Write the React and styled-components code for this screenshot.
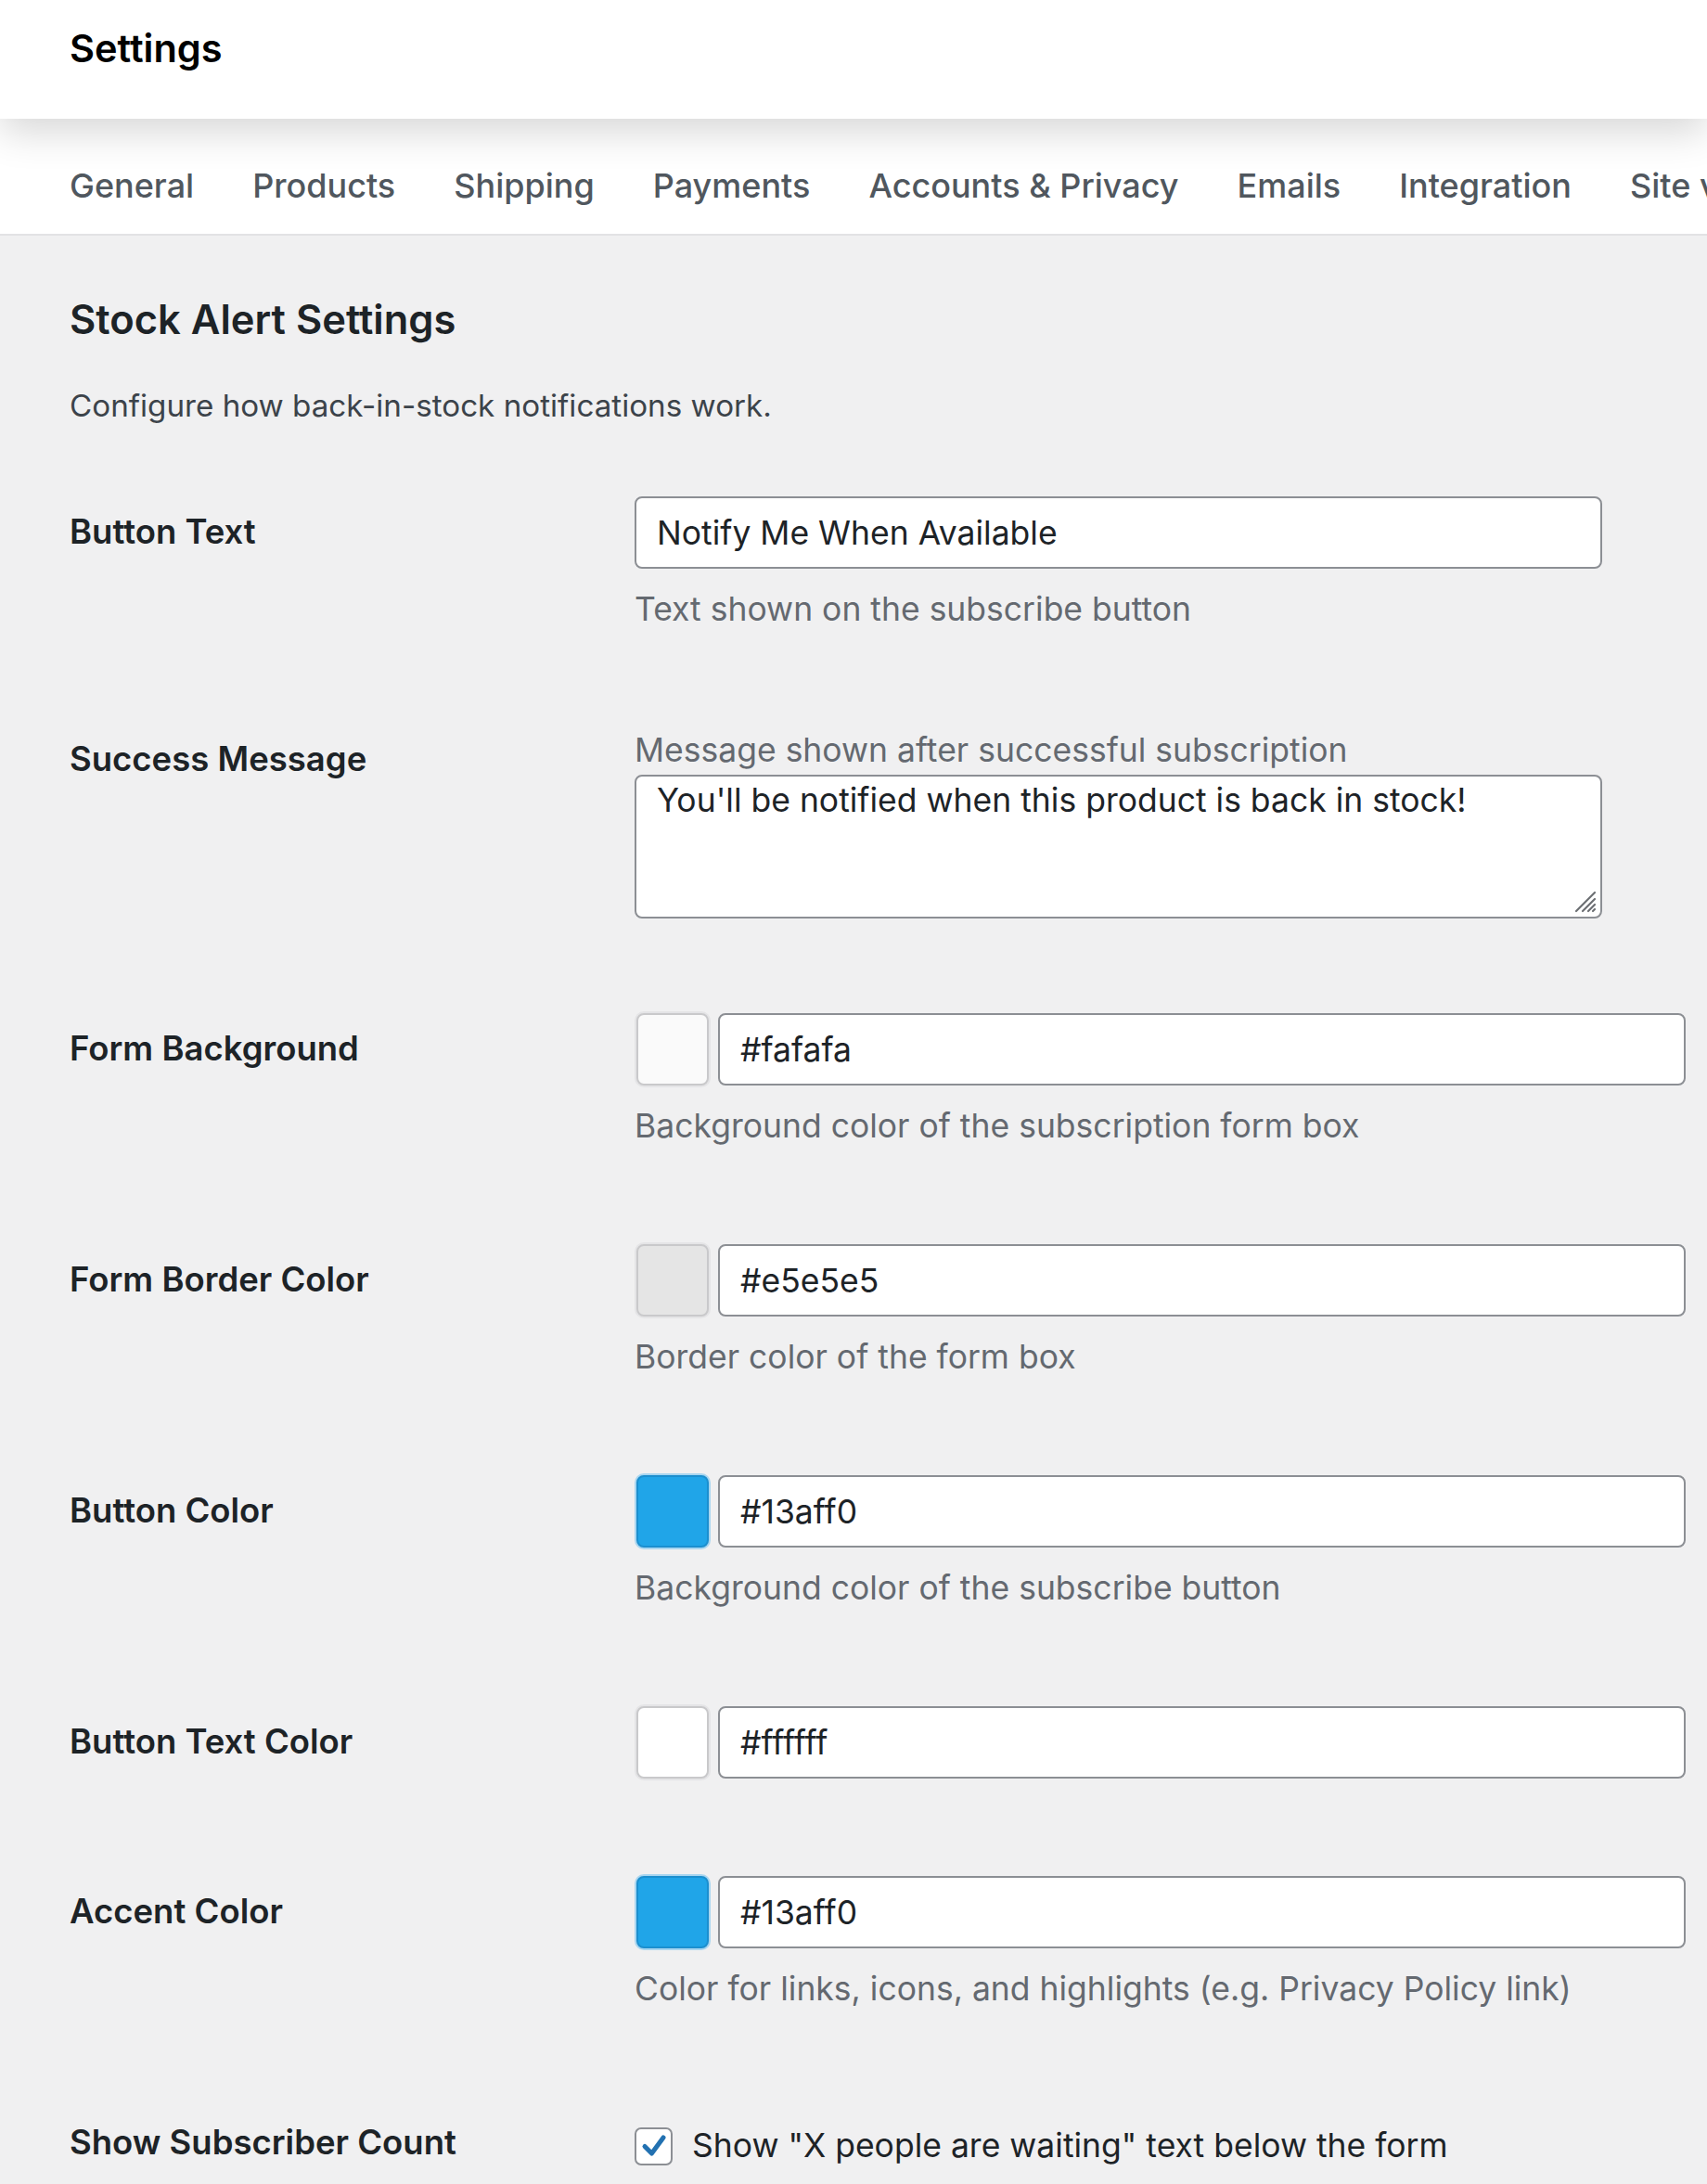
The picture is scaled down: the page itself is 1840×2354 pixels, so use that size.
import React from "react";
import styled, { createGlobalStyle } from "styled-components";

const GlobalStyle = createGlobalStyle`
  html, body {
    margin: 0;
    padding: 0;
    background: #f0f0f1;
  }
  body {
    font-family: Inter, "Noto Sans", "Liberation Sans", sans-serif;
    color: #1d2327;
    overflow: hidden;
  }
  * { box-sizing: border-box; }
`;

const Page = styled.div`
  width: 1840px;
  min-height: 2354px;
  background: #f0f0f1;
`;

const Header = styled.header`
  position: relative;
  z-index: 1;
  background: #fff;
  height: 128px;
  padding: 28px 75px 0;
  box-shadow: 0 14px 40px rgba(0, 0, 0, 0.16);
`;

const Title = styled.h1`
  margin: 0;
  font-size: 41.5px;
  line-height: 48px;
  font-weight: 600;
  color: #000;
`;

const Tabs = styled.nav`
  display: flex;
  gap: 63px;
  background: #fff;
  padding: 50px 0 30px 75px;
  border-bottom: 2px solid #e2e2e4;
  white-space: nowrap;
  overflow: hidden;
`;

const Tab = styled.a`
  font-size: 36px;
  line-height: 44px;
  font-weight: 500;
  color: #50575e;
  text-decoration: none;
  flex-shrink: 0;
`;

const Content = styled.main`
  padding: 62px 75px 0;
`;

const SectionTitle = styled.h2`
  margin: 0;
  font-size: 43.5px;
  line-height: 56px;
  font-weight: 600;
  color: #1d2327;
`;

const Intro = styled.p`
  margin: 43px 0 22px;
  font-size: 33.2px;
  line-height: 44px;
  color: #3c434a;
`;

const Row = styled.div`
  display: grid;
  grid-template-columns: 609px 1fr;
  padding: 54px 0 ${(p) => (p.tight ? "48px" : "51px")};
`;

const Label = styled.div`
  padding-top: ${(p) => (p.high ? "12px" : "16px")};
  font-size: 36.5px;
  line-height: 44px;
  font-weight: 600;
  color: #1d2327;
`;

const Field = styled.div`
  display: flex;
  flex-direction: column;
  align-items: flex-start;
`;

const TextInput = styled.input`
  width: 1043px;
  height: 78px;
  padding: 0 22px;
  border: 2px solid #8c8f94;
  border-radius: 8px;
  background: #fff;
  font-family: inherit;
  font-size: 35.5px;
  color: #1d2327;
  outline: none;
`;

const Help = styled.p`
  margin: ${(p) => (p.above ? "3px 0 4px" : "22px 0 0")};
  font-size: 35.5px;
  line-height: 44px;
  color: #646970;
`;

const AreaWrap = styled.div`
  position: relative;
  width: 1043px;
`;

const TextArea = styled.textarea`
  display: block;
  width: 1043px;
  height: 155px;
  padding: 4px 22px;
  border: 2px solid #8c8f94;
  border-radius: 8px;
  background: #fff;
  font-family: inherit;
  font-size: 35.5px;
  line-height: 44px;
  color: #1d2327;
  resize: none;
  outline: none;
`;

const Grip = styled.svg`
  position: absolute;
  right: 4px;
  bottom: 4px;
  width: 28px;
  height: 28px;
`;

const ColorLine = styled.div`
  display: flex;
  align-items: center;
  gap: 10px;
  padding-left: 2px;
`;

const Swatch = styled.span`
  display: block;
  width: 78px;
  height: 78px;
  border-radius: 8px;
  background: ${(p) => p.color};
  border: 2px solid ${(p) => (p.dark ? "#1b8fcf" : "#c9c9cb")};
  box-shadow: 0 0 0 2px ${(p) => (p.dark ? "#a9d6f0" : "#e4e4e6")};
`;

const CheckLine = styled.label`
  display: flex;
  align-items: center;
  gap: 21px;
  margin-top: 20px;
  font-size: 35.5px;
  line-height: 44px;
  color: #1d2327;
`;

const CheckBox = styled.span`
  display: flex;
  align-items: center;
  justify-content: center;
  width: 41px;
  height: 41px;
  border: 2px solid #8c8f94;
  border-radius: 7px;
  background: #fff;
`;

const tabs = [
  "General",
  "Products",
  "Shipping",
  "Payments",
  "Accounts & Privacy",
  "Emails",
  "Integration",
  "Site visibility",
];

const colors = [
  { label: "Form Background", value: "#fafafa", help: "Background color of the subscription form box" },
  { label: "Form Border Color", value: "#e5e5e5", help: "Border color of the form box" },
  { label: "Button Color", value: "#13aff0", swatch: "#20a5e8", dark: true, help: "Background color of the subscribe button" },
  { label: "Button Text Color", value: "#ffffff" },
  {
    label: "Accent Color",
    value: "#13aff0",
    swatch: "#20a5e8",
    dark: true,
    help: "Color for links, icons, and highlights (e.g. Privacy Policy link)",
  },
];

const App = () => {
  return (
    <Page>
      <GlobalStyle />
      <Header>
        <Title>Settings</Title>
      </Header>
      <Tabs>
        {tabs.map((t) => (
          <Tab key={t} href="#">
            {t}
          </Tab>
        ))}
      </Tabs>
      <Content>
        <SectionTitle>Stock Alert Settings</SectionTitle>
        <Intro>Configure how back-in-stock notifications work.</Intro>

        <Row>
          <Label>Button Text</Label>
          <Field>
            <TextInput defaultValue="Notify Me When Available" />
            <Help>Text shown on the subscribe button</Help>
          </Field>
        </Row>

        <Row tight>
          <Label high>Success Message</Label>
          <Field>
            <Help above>Message shown after successful subscription</Help>
            <AreaWrap>
              <TextArea defaultValue="You'll be notified when this product is back in stock!" />
              <Grip viewBox="0 0 28 28">
                <g stroke="#6b6e72" strokeWidth="2.2" strokeLinecap="round">
                  <line x1="4" y1="24" x2="24" y2="4" />
                  <line x1="11" y1="24" x2="24" y2="11" />
                  <line x1="17" y1="24" x2="24" y2="17" />
                  <line x1="22" y1="24" x2="24" y2="22" />
                </g>
              </Grip>
            </AreaWrap>
          </Field>
        </Row>

        {colors.map((c) => (
          <Row key={c.label}>
            <Label>{c.label}</Label>
            <Field>
              <ColorLine>
                <Swatch color={c.swatch || c.value} dark={c.dark} />
                <TextInput defaultValue={c.value} />
              </ColorLine>
              {c.help && <Help>{c.help}</Help>}
            </Field>
          </Row>
        ))}

        <Row>
          <Label>Show Subscriber Count</Label>
          <Field>
            <CheckLine>
              <CheckBox>
                <svg width="30" height="30" viewBox="0 0 30 30">
                  <path
                    d="M5 15.5 L12.5 23 L25 6"
                    fill="none"
                    stroke="#2271b1"
                    strokeWidth="5"
                    strokeLinecap="round"
                    strokeLinejoin="round"
                  />
                </svg>
              </CheckBox>
              Show "X people are waiting" text below the form
            </CheckLine>
          </Field>
        </Row>
      </Content>
    </Page>
  );
};

export default App;
